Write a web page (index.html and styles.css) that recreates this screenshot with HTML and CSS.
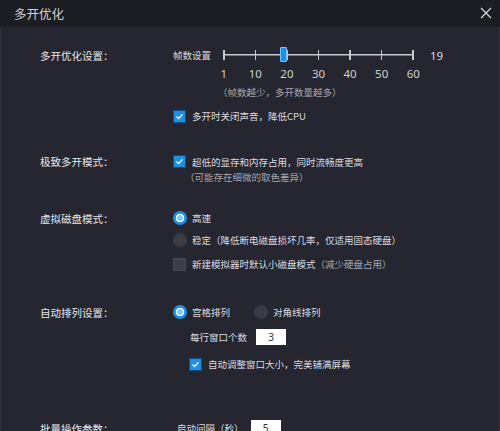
FILE: index.html
```html
<!DOCTYPE html>
<html lang="zh-CN">
<head>
<meta charset="utf-8">
<title>多开优化</title>
<link rel="stylesheet" href="styles.css">
</head>
<body>
<div class="win">
  <div class="titlebar">
    <span class="title">多开优化</span>
    <svg class="close" width="12" height="12" viewBox="0 0 12 12"><path d="M1 1L11 11M11 1L1 11" stroke="#d4d4d8" stroke-width="1.3" fill="none"/></svg>
  </div>
  <div class="body">
    <section class="sec s1">
      <div class="lbl h20">多开优化设置：</div>
      <div class="ctl">
        <div class="row h20">
          <span class="fps">帧数设置</span>
          <div class="track">
            <i></i><i></i><i></i><i></i><i></i><i></i><i></i>
            <span class="handle" style="left:57px"></span>
          </div>
          <span class="val">19</span>
        </div>
        <div class="row h16 nums">
          <span>1</span><span>10</span><span>20</span><span>30</span><span>40</span><span>50</span><span>60</span>
        </div>
        <div class="row h16 hint mt3 pl45">（帧数越少，多开数量越多）</div>
        <div class="row h16 mt8">
          <span class="cb on"><svg viewBox="0 0 13 13"><path d="M3 6.6L5.5 9L10 4" stroke="#fff" stroke-width="1.6" fill="none"/></svg></span>
          <span class="txt">多开时关闭声音，降低CPU</span>
        </div>
      </div>
    </section>

    <section class="sec s2">
      <div class="lbl h17">极致多开模式：</div>
      <div class="ctl">
        <div class="row h17">
          <span class="cb on"><svg viewBox="0 0 13 13"><path d="M3 6.6L5.5 9L10 4" stroke="#fff" stroke-width="1.6" fill="none"/></svg></span>
          <span class="txt">超低的显存和内存占用，同时流畅度更高</span>
        </div>
        <div class="row h14 hint pl12">（可能存在细微的取色差异）</div>
      </div>
    </section>

    <section class="sec s3">
      <div class="lbl h18">虚拟磁盘模式：</div>
      <div class="ctl">
        <div class="row h18">
          <span class="rd on"></span><span class="txt rt">高速</span>
        </div>
        <div class="row h18 mt4">
          <span class="rd"></span><span class="txt rt">稳定（降低断电磁盘损坏几率，仅适用固态硬盘）</span>
        </div>
        <div class="row h18 mt6">
          <span class="cb"></span><span class="txt">新建模拟器时默认小磁盘模式<span class="dim">（减少硬盘占用）</span></span>
        </div>
      </div>
    </section>

    <section class="sec s4">
      <div class="lbl h18">自动排列设置：</div>
      <div class="ctl">
        <div class="row h18">
          <span class="rd on"></span><span class="txt rt">宫格排列</span>
          <span class="rd second"></span><span class="txt rt">对角线排列</span>
        </div>
        <div class="row h16 mt8 pl17">
          <span class="txt">每行窗口个数</span><span class="inp g9">3</span>
        </div>
        <div class="row h18 mt10 pl16">
          <span class="cb on"><svg viewBox="0 0 13 13"><path d="M3 6.6L5.5 9L10 4" stroke="#fff" stroke-width="1.6" fill="none"/></svg></span>
          <span class="txt">自动调整窗口大小，完美铺满屏幕</span>
        </div>
      </div>
    </section>

    <section class="sec s5">
      <div class="lbl h16">批量操作参数：</div>
      <div class="ctl">
        <div class="row h16 pl4">
          <span class="txt">启动间隔（秒）</span><span class="inp g7">5</span>
        </div>
      </div>
    </section>
  </div>
</div>
</body>
</html>
```
FILE: styles.css
```css
html, body {
  margin: 0;
  padding: 0;
  background: #25262f;
}
body {
  width: 500px;
  height: 431px;
  overflow: hidden;
  font-family: "Noto Sans CJK SC", "Noto Sans", sans-serif;
  color: #dcdce0;
}
.win {
  width: 500px;
  height: 431px;
  display: flex;
  flex-direction: column;
}
.titlebar {
  height: 27px;
  flex: none;
  background: #1c1d22;
  display: flex;
  align-items: center;
  justify-content: space-between;
  padding: 0 8px 0 14px;
}
.title {
  font-size: 12.5px;
  color: #d2d2d6;
  letter-spacing: 0;
}
.close {
  display: block;
  margin-top: -1px;
}
.body {
  flex: 1;
  display: flex;
  flex-direction: column;
  border-left: 1px solid #30323c;
  border-right: 1px solid #30323c;
}
.sec {
  display: flex;
  padding-left: 39px;
}
.s1 { margin-top: 18px; }
.s2 { margin-top: 29px; }
.s3 { margin-top: 25px; }
.s4 { margin-top: 30px; }
.s5 { margin-top: 47px; }
.lbl {
  width: 133px;
  flex: none;
  font-size: 10.5px;
  color: #e8e8ec;
  display: flex;
  align-items: center;
  white-space: nowrap;
}
.ctl {
  display: flex;
  flex-direction: column;
}
.row {
  display: flex;
  align-items: center;
  white-space: nowrap;
}
.h14 { height: 14px; }
.h16 { height: 16px; }
.h17 { height: 17px; }
.h18 { height: 18px; }
.h20 { height: 20px; }
.mt3 { margin-top: 3px; }
.mt4 { margin-top: 4px; }
.mt6 { margin-top: 6px; }
.mt8 { margin-top: 8px; }
.mt10 { margin-top: 10px; }
.pl4 { padding-left: 4px; }
.pl12 { padding-left: 12px; }
.pl16 { padding-left: 16px; }
.pl17 { padding-left: 17px; }
.pl45 { padding-left: 45px; }

.txt {
  font-size: 9.5px;
  color: #dcdce0;
}
.hint {
  font-size: 9.5px;
  color: #a4a5ad;
}
.dim { color: #a4a5ad; }

.fps {
  width: 50px;
  font-size: 9.5px;
  color: #dcdce0;
}
.track {
  position: relative;
  width: 191px;
  height: 10px;
  display: flex;
  justify-content: space-between;
  align-items: center;
  background: linear-gradient(#c8c8cc, #c8c8cc) center / 100% 1.5px no-repeat;
}
.track i {
  display: block;
  width: 1.5px;
  height: 10px;
  background: #c8c8cc;
}
.handle {
  position: absolute;
  top: -3px;
  width: 5px;
  height: 13px;
  background: #1c8fe6;
  border: 1px solid #7cc4f7;
  border-radius: 1px;
}
.val {
  margin-left: 16px;
  font-family: "Noto Sans", sans-serif;
  font-size: 11.5px;
  color: #dcdce0;
}
.nums {
  padding-left: 50px;
  width: 191px;
  justify-content: space-between;
  box-sizing: content-box;
}
.nums span {
  width: 1.5px;
  display: flex;
  justify-content: center;
  font-family: "Noto Sans", sans-serif;
  font-size: 11.5px;
  color: #cfd0d4;
}

.cb {
  width: 13px;
  height: 13px;
  flex: none;
  box-sizing: border-box;
  background: #3b3d47;
  border: 1px solid #464852;
  margin-right: 6px;
  display: flex;
}
.cb.on {
  background: #1e90e2;
  border: 1px solid #0e4f86;
}
.cb svg {
  width: 11px;
  height: 11px;
}
.rd {
  width: 14px;
  height: 14px;
  flex: none;
  box-sizing: border-box;
  border-radius: 50%;
  background: #3a3b45;
  margin-right: 5px;
}
.rd.on {
  background: radial-gradient(circle, #7fcaf8 0 2.6px, #f2f8fd 3px 4px, #1c8fe6 4.6px);
}
.rd.second { margin-left: 24px; }
.rt { margin-left: 0; }

.inp {
  width: 30px;
  height: 16px;
  background: #ffffff;
  color: #333;
  font-family: "Noto Sans", sans-serif;
  font-size: 10px;
  display: flex;
  align-items: center;
  justify-content: center;
}
.g9 { margin-left: 9px; }
.g7 { margin-left: 7px; }
```
